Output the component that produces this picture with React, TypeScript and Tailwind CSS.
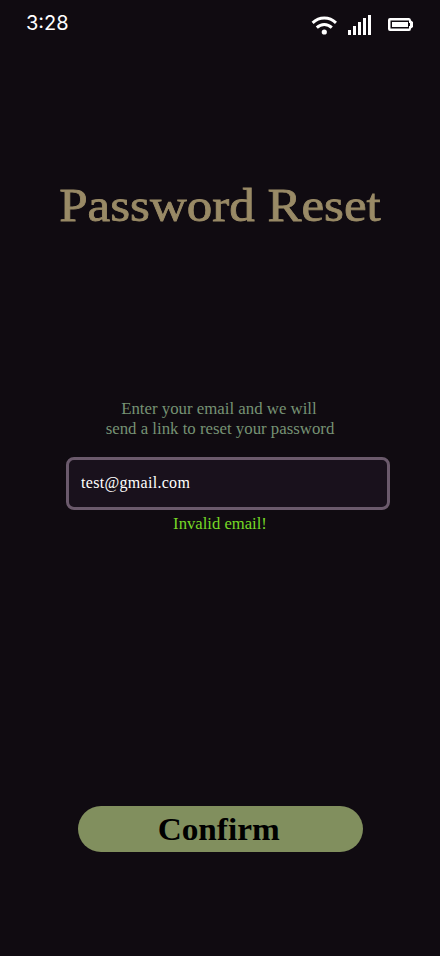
function StatusBar() {
  return (
    <header className="flex h-[50px] items-start justify-between pl-[26px] pr-[27px]">
      <time className="pt-[8px] font-['Inter',sans-serif] text-[20px] leading-[31px] text-white">3:28</time>
      <div className="flex items-start pt-[14px] text-white">
        <svg className="mt-[2px] block" width="26" height="19" viewBox="0 0 26 19" fill="none" stroke="currentColor" strokeWidth="3">
          <path d="M1.6 6.8Q6.7 2 13.3 2T25 6.8" />
          <path d="M5.8 11.6Q9.1 8.5 13.3 8.5T20.8 11.6" />
          <circle cx="13.3" cy="16" r="2.6" fill="currentColor" stroke="none" />
        </svg>
        <svg className="ml-[11px] block" width="24" height="21" viewBox="0 0 24 21" fill="currentColor">
          <rect x="0" y="16" width="3" height="5" />
          <rect x="5" y="12" width="3" height="9" />
          <rect x="10" y="8" width="3" height="13" />
          <rect x="15" y="4" width="3" height="17" />
          <rect x="20" y="1" width="3" height="20" />
        </svg>
        <svg className="ml-[16px] mt-[4px] block" width="25" height="13" viewBox="0 0 25 13" fill="none">
          <path d="M2 0H21Q23 0 23 2.5L25 4V9L23 10.5Q23 13 21 13H2Q0 13 0 11V2Q0 0 2 0Z" fill="currentColor" />
          <path d="M2.5 2.5H21V5H22V8H21V10.5H2.5Z" fill="#100b11" />
          <rect x="4" y="4" width="16" height="5" fill="currentColor" />
        </svg>
      </div>
    </header>
  );
}

export default function App() {
  return (
    <main className="flex h-[956px] w-[440px] flex-col overflow-hidden bg-[#100b11] font-['Liberation_Serif',serif]">
      <StatusBar />
      <h1 className="mt-[125px] scale-x-[1.085] whitespace-nowrap text-center text-[47px] leading-[60px] text-[#998a66] [-webkit-text-stroke:0.8px_#998a66]">
        Password Reset
      </h1>
      <p className="mt-[164px] scale-x-[1.05] text-center text-[16px] leading-[20px] text-[#769274]">
        <span className="inline-block pr-[2px]">Enter your email and we will</span>
        <br />
        send a link to reset your password
      </p>
      <input
        type="text"
        defaultValue="test@gmail.com"
        aria-label="Email"
        className="ml-[66px] mt-[18px] block h-[53px] w-[324px] rounded-[8px] border-3 border-[#6b5a6c] bg-[#19111c] px-[12px] pb-[2px] text-[16px] tracking-[0.3px] text-white outline-none"
      />
      <p className="mt-[4px] scale-x-[1.04] text-center text-[16px] leading-[20px] text-[#76d926]">Invalid email!</p>
      <button className="ml-[78px] mt-[272px] h-[46px] w-[285px] rounded-full bg-[#818f5e] pr-[4px] text-[32px] leading-[46px] font-bold text-black">
        <span className="inline-block scale-x-[1.04]">Confirm</span>
      </button>
    </main>
  );
}
